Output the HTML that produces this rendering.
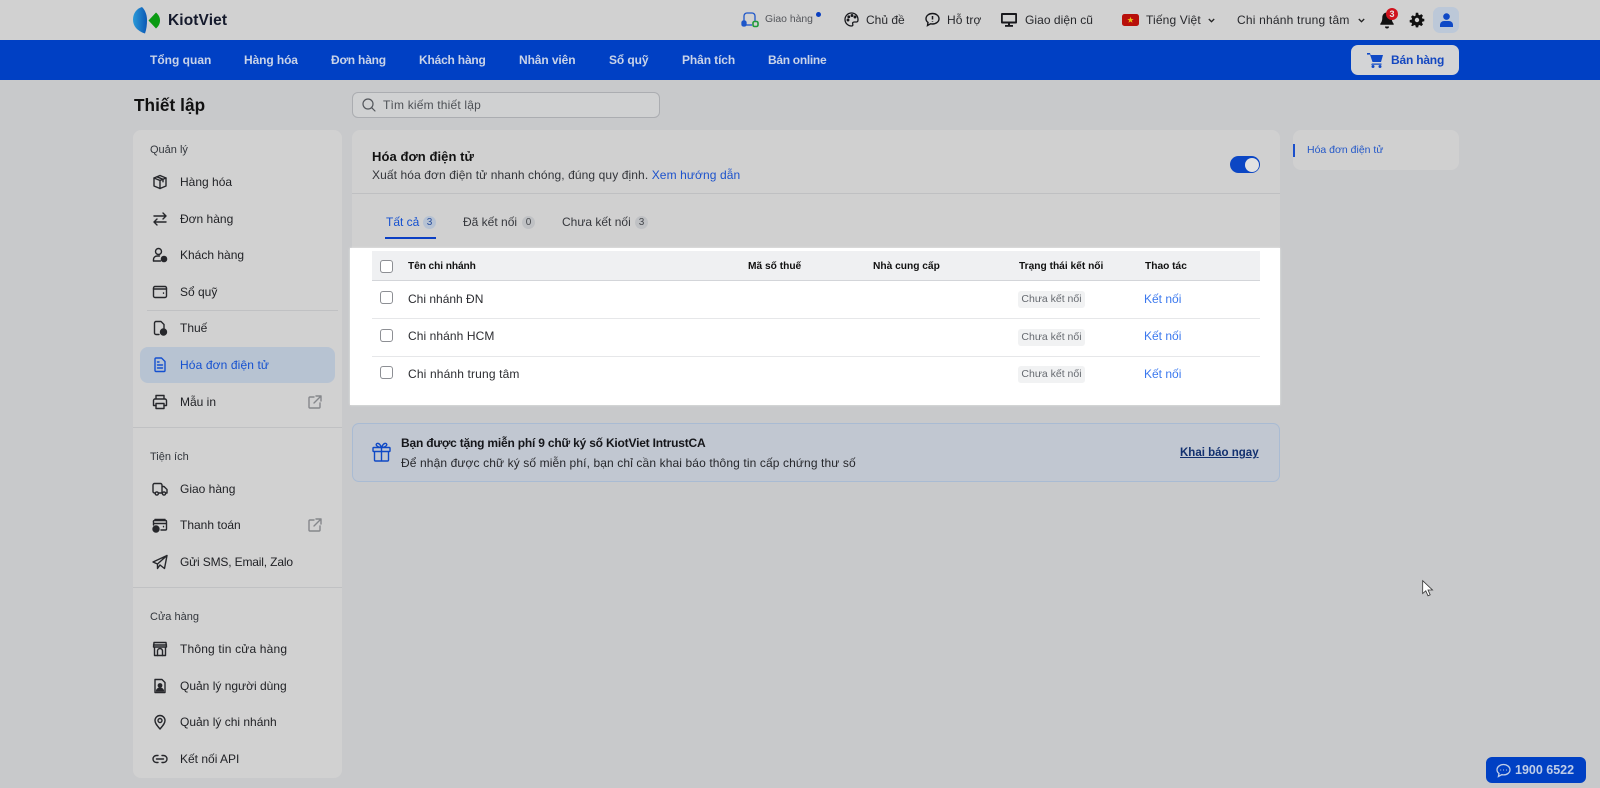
<!DOCTYPE html>
<html lang="vi"><head><meta charset="utf-8"><title>Thiết lập</title>
<style>
*{box-sizing:border-box}
html,body{margin:0;padding:0}
body{width:1600px;height:788px;overflow:hidden;background:#c8c9cb;position:relative;font-family:"Liberation Sans","DejaVu Sans",sans-serif;font-size:12px;color:#1c1c20}
.b{position:absolute}
.t{position:absolute;white-space:nowrap;line-height:20px;height:20px}
.n{font-weight:700;color:#c9d3e8;top:50px;letter-spacing:-.1px}
.s{font-size:11px;color:#33373d;left:150px}
.m{left:180px;color:#1f2024}
svg{position:absolute;overflow:visible}
.i{width:16px;height:16px;left:152px;fill:none;stroke:#26272b;stroke-width:1.4;stroke-linecap:round;stroke-linejoin:round}
.d{position:absolute;height:1px;background:#c0c1c3}
.cb{position:absolute;left:380px;width:13px;height:13px;border:1.2px solid #8d8f94;border-radius:3px;background:#fff}
.th{font-size:10.2px;font-weight:700;color:#111;top:257px}
.chip{position:absolute;left:1018px;width:67px;height:17px;background:#f1f2f3;border-radius:3px;color:#666a70;font-size:10.5px;line-height:17px;text-align:center;white-space:nowrap}
.lk{left:1144px;color:#3a78ee}
.bd{position:absolute;width:13px;height:13px;border-radius:50%;background:#bfc1c4;color:#44474c;font-size:10px;line-height:13px;text-align:center;top:215.5px}
</style></head><body>

<!-- top bar -->
<div class="b" style="left:0;top:0;width:1600px;height:40px;background:#d1d1d1"></div>
<svg style="left:133px;top:7px" width="42" height="27" viewBox="0 0 42 27"><defs><linearGradient id="g" x1="0" x2="1"><stop offset="0" stop-color="#2a9ad8"/><stop offset="1" stop-color="#0b58b5"/></linearGradient></defs><path d="M9 0C4 1.500 0 6 0 12.500S4 24 12 26.500C13.500 22 14 18 14 13.500S13 4 9 0Z" fill="url(#g)"/><path d="M23 5.500C26 8 27 11 27 13.500S26 19 23 21.500L15.500 13.500Z" fill="#0a9a12"/></svg>
<div class="t" style="left:168px;top:11px;font-size:15.500px;font-weight:700;color:#151a2c;letter-spacing:.1px">KiotViet</div>

<svg style="left:741px;top:12px" width="18" height="16" viewBox="0 0 18 16" fill="none" stroke="#1d56c9" stroke-width="1.300"><path d="M3 9V4a3 3 0 0 1 3-3h5a3 3 0 0 1 3 3v5"/><rect x="1" y="9" width="4" height="5" rx="1.500" fill="#1d56c9"/><path d="M5 13h6"/><rect x="12" y="9.500" width="5" height="5" rx="1.500" stroke="#1f9a38" stroke-width="1.600"/></svg>
<div class="t" style="left:765px;top:10px;font-size:10.4px;color:#54565b">Giao hàng</div>
<div class="b" style="left:816px;top:12px;width:5px;height:5px;border-radius:50%;background:#0a3fc0"></div>

<svg style="left:844px;top:12px" width="15" height="15" viewBox="0 0 15 15" fill="none" stroke="#17181c" stroke-width="1.300"><path d="M7.500 1a6.500 6.500 0 0 0 0 13c1.500 0 1.500-1 1.200-2-.4-1.200.3-2 1.500-2h2.300c1-.1 1.500-1 1.500-2.300C14 3.500 11 1 7.500 1Z"/><circle cx="4" cy="8" r=".8" fill="#17181c"/><circle cx="4.800" cy="4.800" r=".8" fill="#17181c"/><circle cx="8" cy="3.500" r=".8" fill="#17181c"/><circle cx="11" cy="5" r=".8" fill="#17181c"/></svg>
<div class="t" style="left:866px;top:10px;color:#27282c">Chủ đề</div>

<svg style="left:925px;top:12px" width="15" height="15" viewBox="0 0 15 15" fill="none" stroke="#17181c" stroke-width="1.400"><path d="M7.500 1.500c-3.600 0-6.500 2.300-6.500 5.200 0 1.500.8 2.800 2 3.700L2.500 13.500l3-1.700c.6.100 1.300.2 2 .2 3.600 0 6.500-2.400 6.500-5.300s-2.900-5.200-6.500-5.200Z"/><path d="M7.500 4v3.500M7.500 9v.6" stroke-width="1.500"/></svg>
<div class="t" style="left:947px;top:10px;color:#27282c;letter-spacing:.1px">Hỗ trợ</div>

<svg style="left:1001px;top:13px" width="16" height="14" viewBox="0 0 16 14"><rect x="0" y="0" width="16" height="10.500" rx="1" fill="#17181c"/><rect x="1.800" y="2" width="12.400" height="6.500" fill="#d1d1d1"/><rect x="4" y="12" width="8" height="1.800" fill="#17181c"/><rect x="7" y="10" width="2" height="2.500" fill="#17181c"/></svg>
<div class="t" style="left:1025px;top:10px;color:#27282c;letter-spacing:.05px">Giao diện cũ</div>

<svg style="left:1122px;top:14px" width="17" height="12" viewBox="0 0 17 12"><rect width="17" height="12" rx="2.500" fill="#b80f0a"/><path d="M8.500 2.800l.9 2.300h2.300l-1.900 1.400.7 2.300-2-1.400-2 1.400.7-2.300-1.900-1.400h2.300Z" fill="#e8c21a"/></svg>
<div class="t" style="left:1146px;top:10px;color:#27282c;letter-spacing:.15px">Tiếng Việt</div>
<svg style="left:1208px;top:18px" width="7" height="5" viewBox="0 0 7 5" fill="none" stroke="#222" stroke-width="1.300"><path d="M.8 1l2.700 2.700L6.200 1"/></svg>
<div class="t" style="left:1237px;top:10px;color:#27282c;letter-spacing:.2px">Chi nhánh trung tâm</div>
<svg style="left:1358px;top:18px" width="7" height="5" viewBox="0 0 7 5" fill="none" stroke="#222" stroke-width="1.300"><path d="M.8 1l2.700 2.700L6.200 1"/></svg>

<svg style="left:1380px;top:12px" width="14" height="17" viewBox="0 0 14 17"><path d="M7 0.500c-3 0-4.700 2.300-4.700 5 0 3.500-1 5-2 6.200v1h13.400v-1c-1-1.200-2-2.700-2-6.200 0-2.700-1.700-5-4.700-5Z" fill="#111"/><path d="M5 14.500h4a2 2 0 0 1-4 0Z" fill="#111"/></svg>
<div class="b" style="left:1386px;top:8px;width:12px;height:12px;border-radius:50%;background:#d0131d;color:#e6e6e6;font-size:9px;font-weight:700;line-height:12px;text-align:center">3</div>
<svg style="left:1410px;top:13px" width="14" height="14" viewBox="0 0 14 14"><path fill="#111" fill-rule="evenodd" d="M5.800 0h2.400l.3 1.900 1.200.5 1.600-1.100 1.700 1.700-1.100 1.600.5 1.200 1.900.3v2.400l-1.900.3-.5 1.200 1.100 1.600-1.700 1.700-1.600-1.100-1.200.5-.3 1.900H5.800l-.3-1.900-1.200-.5-1.600 1.100L1 12.700l1.100-1.600-.5-1.200L-.3 9.600V7.200l1.900-.3.500-1.200L1 4.100 2.700 2.400l1.600 1.100 1.200-.5ZM7 5a2.200 2.200 0 1 0 0 4.400A2.200 2.200 0 0 0 7 5Z" transform="translate(0 -.2)"/></svg>
<div class="b" style="left:1433px;top:7px;width:26px;height:26px;border-radius:7px;background:#bcc8d8"></div>
<svg style="left:1440px;top:13px" width="13" height="14" viewBox="0 0 13 14"><circle cx="6.500" cy="3.600" r="3.300" fill="#0f49c6"/><path d="M0 14v-2c0-2.500 2-4 4-4h5c2 0 4 1.500 4 4v2Z" fill="#0f49c6"/></svg>

<!-- nav -->
<div class="b" style="left:0;top:40px;width:1600px;height:40px;background:#0040c4"></div>
<div class="t n" style="left:150px;letter-spacing:0">Tổng quan</div>
<div class="t n" style="left:244px">Hàng hóa</div>
<div class="t n" style="left:331px;letter-spacing:-.2px">Đơn hàng</div>
<div class="t n" style="left:419px;letter-spacing:-.2px">Khách hàng</div>
<div class="t n" style="left:519px">Nhân viên</div>
<div class="t n" style="left:609px">Sổ quỹ</div>
<div class="t n" style="left:682px">Phân tích</div>
<div class="t n" style="left:768px;letter-spacing:-.3px">Bán online</div>
<div class="b" style="left:1351px;top:45px;width:108px;height:30px;background:#d3d4d6;border-radius:7px"></div>
<svg style="left:1367px;top:52px" width="16" height="16" viewBox="0 0 16 16"><path d="M0 1h3l.6 2H16l-2 7H5.500L3 2.600H0Z" fill="#0f49c6"/><path d="M5 11.500h9.500v1.200H4Z" fill="#0f49c6"/><circle cx="6" cy="14.500" r="1.500" fill="#0f49c6"/><circle cx="13" cy="14.500" r="1.500" fill="#0f49c6"/></svg>
<div class="t" style="left:1391px;top:50px;font-weight:700;color:#1347c0;letter-spacing:-.2px">Bán hàng</div>

<!-- page title + search -->
<div class="t" style="left:134px;top:95px;font-size:17.200px;font-weight:700;color:#111;letter-spacing:.05px">Thiết lập</div>
<div class="b" style="left:352px;top:92px;width:308px;height:26px;background:#d0d1d2;border:1px solid #abadb1;border-radius:6px"></div>
<svg style="left:362px;top:98px" width="14" height="14" viewBox="0 0 14 14" fill="none" stroke="#53565b" stroke-width="1.200"><circle cx="6" cy="6" r="5"/><path d="M9.800 9.800L13 13" stroke-linecap="round"/></svg>
<div class="t" style="left:383px;top:95px;color:#4d5055;letter-spacing:.18px">Tìm kiếm thiết lập</div>

<!-- sidebar -->
<div class="b" style="left:133px;top:130px;width:209px;height:648px;background:#d1d1d1;border-radius:8px"></div>
<div class="t s" style="top:140px">Quản lý</div>

<svg class="i" style="top:174px" viewBox="0 0 16 16"><path d="M8 1.500l6 2.500v8l-6 2.500L2 12V4Z"/><path d="M2 4l6 2.500L14 4M8 6.500v8M5 2.800l6 2.500v2.500"/></svg>
<div class="t m" style="top:172px">Hàng hóa</div>
<svg class="i" style="top:211px" viewBox="0 0 16 16"><path d="M2 5h12M11 2l3 3-3 3M14 11H2M5 8l-3 3 3 3"/></svg>
<div class="t m" style="top:209px">Đơn hàng</div>
<svg class="i" style="top:247px" viewBox="0 0 16 16"><circle cx="6.500" cy="4.500" r="3"/><path d="M1.500 14v-1.500c0-2 1.500-3.500 4-3.500h2"/><path d="M1.500 14h7"/><circle cx="12" cy="12" r="2.600" fill="#26272b"/></svg>
<div class="t m" style="top:245px">Khách hàng</div>
<svg class="i" style="top:284px" viewBox="0 0 16 16"><rect x="1.500" y="2.500" width="13" height="11" rx="1.500"/><path d="M1.500 5h13M11.500 9v.3"/></svg>
<div class="t m" style="top:282px">Sổ quỹ</div>
<div class="d" style="left:147px;top:310px;width:191px"></div>
<svg class="i" style="top:320px" viewBox="0 0 16 16"><path d="M7 14.500H4a1.500 1.500 0 0 1-1.500-1.500V3A1.500 1.500 0 0 1 4 1.500h5l3 3V8"/><circle cx="11.500" cy="12" r="3" fill="#26272b"/></svg>
<div class="t m" style="top:318px">Thuế</div>

<div class="b" style="left:140px;top:347px;width:195px;height:36px;background:#b7c3d2;border-radius:8px"></div>
<svg class="i" style="top:357px;stroke:#1450d0" viewBox="0 0 16 16"><path d="M3 2.500A1 1 0 0 1 4 1.500h5.500L13 5v9a1 1 0 0 1-1 1H4a1 1 0 0 1-1-1Z" transform="translate(0 -.5)"/><path d="M5.500 8h5M5.500 11h5M5.500 5h1.500"/></svg>
<div class="t m" style="top:355px;color:#1450d0;letter-spacing:.12px">Hóa đơn điện tử</div>
<svg class="i" style="top:394px" viewBox="0 0 16 16"><path d="M4 5V1.500h8V5M4 11.500H1.500V6.500a1.500 1.500 0 0 1 1.500-1.500h10a1.500 1.500 0 0 1 1.500 1.500v5H12"/><rect x="4" y="9.500" width="8" height="5"/></svg>
<div class="t m" style="top:392px">Mẫu in</div>
<svg class="i" style="left:308px;top:395px;width:14px;height:14px;stroke:#85878b" viewBox="0 0 14 14"><path d="M6 2H2a1 1 0 0 0-1 1v9a1 1 0 0 0 1 1h9a1 1 0 0 0 1-1V8M8 1h5v5M13 1L6 8"/></svg>
<div class="d" style="left:133px;top:427px;width:209px"></div>

<div class="t s" style="top:447px">Tiện ích</div>
<svg class="i" style="top:481px" viewBox="0 0 16 16"><path d="M3 12H2.500A1.500 1.500 0 0 1 1 10.500V4a1.500 1.500 0 0 1 1.500-1.500h6A1.500 1.500 0 0 1 10 4v8H6.500M10 5.500h2l3 3V12h-1"/><circle cx="4.800" cy="12.500" r="1.600"/><circle cx="12" cy="12.500" r="1.600"/></svg>
<div class="t m" style="top:479px">Giao hàng</div>
<svg class="i" style="top:517px" viewBox="0 0 16 16"><path d="M3 3.500V2.500h10v1M1.500 8V5a1 1 0 0 1 1-1.500h11a1 1 0 0 1 1 1V12a1 1 0 0 1-1 1H9M1.500 6.500h13M11.500 9.500v.3"/><circle cx="4" cy="12" r="3" fill="#26272b"/></svg>
<div class="t m" style="top:515px">Thanh toán</div>
<svg class="i" style="left:308px;top:518px;width:14px;height:14px;stroke:#85878b" viewBox="0 0 14 14"><path d="M6 2H2a1 1 0 0 0-1 1v9a1 1 0 0 0 1 1h9a1 1 0 0 0 1-1V8M8 1h5v5M13 1L6 8"/></svg>
<svg class="i" style="top:554px" viewBox="0 0 16 16"><path d="M15 1.500L1 8l4.500 2L15 1.500ZM15 1.500L12.500 14.500 8 11M5.500 10v4.500L8 11"/></svg>
<div class="t m" style="top:552px;letter-spacing:-.16px">Gửi SMS, Email, Zalo</div>
<div class="d" style="left:133px;top:587px;width:209px"></div>

<div class="t s" style="top:607px">Cửa hàng</div>
<svg class="i" style="top:641px" viewBox="0 0 16 16"><path d="M2 1.500h12l.5 4.500H1.500ZM2.500 6v8.500h11V6M1.500 4h13"/><path d="M5.500 14.500V10a2.500 2.500 0 0 1 5 0v4.500"/></svg>
<div class="t m" style="top:639px;letter-spacing:.17px">Thông tin cửa hàng</div>
<svg class="i" style="top:678px" viewBox="0 0 16 16"><path d="M3 1.500h7l3 3v10H3Z"/><circle cx="8" cy="7.500" r="1.700" fill="#26272b"/><path d="M4.500 13c.5-2 2-2.800 3.500-2.800s3 .8 3.500 2.800Z" fill="#26272b"/></svg>
<div class="t m" style="top:676px">Quản lý người dùng</div>
<svg class="i" style="top:714px" viewBox="0 0 16 16"><path d="M8 15C5.500 12 3 9.500 3 6.500a5 5 0 0 1 10 0C13 9.500 10.500 12 8 15Z"/><circle cx="8" cy="6.500" r="2"/></svg>
<div class="t m" style="top:712px">Quản lý chi nhánh</div>
<svg class="i" style="top:751px" viewBox="0 0 16 16"><path d="M6 4.500H4.500a3.500 3.500 0 0 0 0 7H6M10 4.500h1.500a3.500 3.500 0 0 1 0 7H10M4.500 8h7"/></svg>
<div class="t m" style="top:749px">Kết nối API</div>

<!-- main card -->
<div class="b" style="left:352px;top:130px;width:928px;height:120px;background:#d0d0d0;border-radius:8px 8px 0 0"></div>
<div class="t" style="left:372px;top:147px;font-size:13px;font-weight:700;color:#111;letter-spacing:.07px">Hóa đơn điện tử</div>
<div class="t" style="left:372px;top:165px;color:#33353a;letter-spacing:.1px">Xuất hóa đơn điện tử nhanh chóng, đúng quy định. <span style="color:#1c52cc">Xem hướng dẫn</span></div>
<div class="b" style="left:1230px;top:156px;width:30px;height:17px;border-radius:9px;background:#0b46c4"></div>
<div class="b" style="left:1245px;top:157.500px;width:14px;height:14px;border-radius:50%;background:#e2e2e2"></div>
<div class="d" style="left:352px;top:193px;width:928px;background:#bfc0c2"></div>

<div class="t" style="left:386px;top:212px;color:#1450d0">Tất cả</div>
<div class="bd" style="left:423px;background:#b6c2d3;color:#2a4f9c">3</div>
<div class="b" style="left:385px;top:237px;width:51px;height:1.500px;background:#0b3fc4"></div>
<div class="t" style="left:463px;top:212px;color:#36383d">Đã kết nối</div>
<div class="bd" style="left:522px">0</div>
<div class="t" style="left:562px;top:212px;color:#36383d">Chưa kết nối</div>
<div class="bd" style="left:635px">3</div>

<!-- highlighted table -->
<div class="b" style="left:350px;top:248px;width:930px;height:157px;background:#fff;box-shadow:0 0 2px #e9e9e9"></div>
<div class="b" style="left:372px;top:251px;width:888px;height:30px;background:#eff0f2;border-bottom:1px solid #d3d5d9"></div>
<div class="cb" style="top:260px"></div>
<div class="t th" style="left:408px;letter-spacing:-.1px">Tên chi nhánh</div>
<div class="t th" style="left:748px">Mã số thuế</div>
<div class="t th" style="left:873px">Nhà cung cấp</div>
<div class="t th" style="left:1019px">Trạng thái kết nối</div>
<div class="t th" style="left:1145px">Thao tác</div>

<div class="cb" style="top:291px"></div>
<div class="t" style="left:408px;top:289px;color:#2c2d31">Chi nhánh ĐN</div>
<div class="chip" style="top:291px">Chưa kết nối</div>
<div class="t lk" style="top:289px">Kết nối</div>
<div class="d" style="left:372px;top:318px;width:888px;background:#e6e7e9"></div>

<div class="cb" style="top:329px"></div>
<div class="t" style="left:408px;top:326px;color:#2c2d31;letter-spacing:.08px">Chi nhánh HCM</div>
<div class="chip" style="top:329px">Chưa kết nối</div>
<div class="t lk" style="top:326px">Kết nối</div>
<div class="d" style="left:372px;top:356px;width:888px;background:#e6e7e9"></div>

<div class="cb" style="top:366px"></div>
<div class="t" style="left:408px;top:364px;color:#2c2d31;letter-spacing:.15px">Chi nhánh trung tâm</div>
<div class="chip" style="top:366px">Chưa kết nối</div>
<div class="t lk" style="top:364px">Kết nối</div>

<!-- banner -->
<div class="b" style="left:352px;top:423px;width:928px;height:59px;background:#c1c7d1;border:1px solid #a9bbd3;border-radius:7px"></div>
<svg style="left:372px;top:442px" width="19" height="20" viewBox="0 0 19 20" fill="none" stroke="#0f49c6" stroke-width="1.400" stroke-linejoin="round"><rect x="1" y="5.500" width="17" height="4" rx=".8"/><path d="M2.500 9.500V18a1 1 0 0 0 1 1h12a1 1 0 0 0 1-1V9.500M9.500 5.500V19M9.500 5.500C8 2 6.500 1 5 1.500 3.500 2 3.800 5 9.500 5.500ZM9.500 5.500C11 2 12.500 1 14 1.500 15.500 2 15.200 5 9.500 5.500Z"/></svg>
<div class="t" style="left:401px;top:433px;font-weight:700;color:#15161a;letter-spacing:-.2px">Bạn được tặng miễn phí 9 chữ ký số KiotViet IntrustCA</div>
<div class="t" style="left:401px;top:453px;color:#26272b;letter-spacing:.115px">Để nhận được chữ ký số miễn phí, bạn chỉ cần khai báo thông tin cấp chứng thư số</div>
<div class="t" style="left:1180px;top:443px;font-weight:700;color:#12306f;text-decoration:underline;font-size:11.500px">Khai báo ngay</div>

<!-- right anchor -->
<div class="b" style="left:1293px;top:130px;width:166px;height:40px;background:#d0d0d0;border-radius:8px"></div>
<div class="b" style="left:1293px;top:144px;width:2px;height:13px;background:#1a4fcc"></div>
<div class="t" style="left:1307px;top:140px;font-size:10.500px;color:#2458c8">Hóa đơn điện tử</div>

<!-- cursor -->
<svg style="left:1422px;top:580px" width="12" height="17" viewBox="0 0 12 17"><path d="M.7.700V13.500L3.800 10.800 6 15.800 8.200 14.800 6 10H10.500Z" fill="#fff" stroke="#333" stroke-width=".8"/></svg>

<!-- phone -->
<div class="b" style="left:1486px;top:757px;width:100px;height:26px;background:#0040c4;border-radius:6px"></div>
<svg style="left:1496px;top:763px" width="15" height="15" viewBox="0 0 15 15" fill="none" stroke="#bfcde8" stroke-width="1.300"><path d="M7.500 1.500c-3.600 0-6.500 2.400-6.500 5.300 0 1.500.8 2.800 2 3.700l-.6 3 3.300-1.800c.6.100 1.200.2 1.800.2 3.600 0 6.500-2.200 6.500-5.100s-2.900-5.300-6.500-5.300Z"/><path d="M4.500 7h.6M7.300 7h.6M10 7h.6" stroke-width="1.500"/></svg>
<div class="t" style="left:1515px;top:760px;font-weight:700;color:#bfcde8;font-size:12.500px">1900 6522</div>

</body></html>
